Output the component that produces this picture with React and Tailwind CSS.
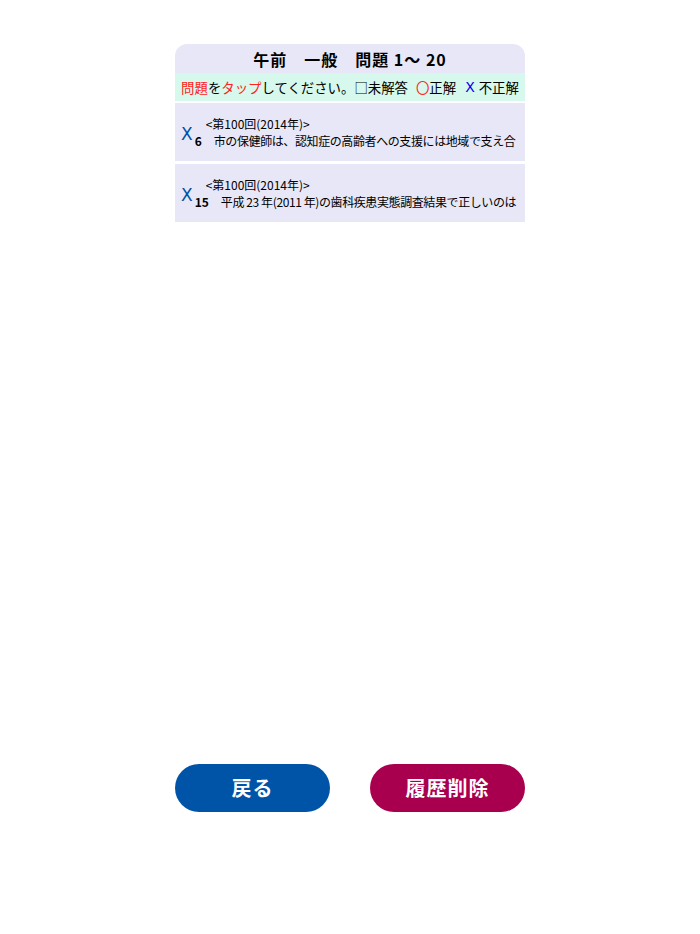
const history = [
  {
    no: 6,
    exam: "<第100回(2014年)>",
    text: "市の保健師は、認知症の高齢者への支援には地域で支え合",
  },
  {
    no: 15,
    exam: "<第100回(2014年)>",
    text: "平成 23 年(2011 年)の歯科疾患実態調査結果で正しいのは",
  },
];

const HistoryRow = ({ item }) => {
  return (
    <div className="h-[58px] flex items-center pl-[6px] bg-[#e8e7f7] overflow-hidden">
      <span className="pt-[4px] font-['DejaVu_Sans',sans-serif] text-[17px] leading-none text-[#0052a8]">X</span>
      <div className="ml-[2px] flex flex-col min-w-0">
        <p className="pl-[11px] text-[12px] leading-[17px] text-black whitespace-nowrap">{item.exam}</p>
        <p className="flex items-baseline text-[12px] leading-[17px] text-black whitespace-nowrap">
          <span className="font-bold">{item.no}</span>
          <span className="ml-3 tracking-[-0.4px]">{item.text}</span>
        </p>
      </div>
    </div>
  );
};

export default function App() {
  return (
    <div className="h-[934px] bg-white flex flex-col items-center font-['Noto_Sans_CJK_JP',sans-serif]">
      <div className="mt-[44px] w-[350px] flex flex-col">
        <div className="h-[29px] rounded-t-[12px] bg-[#e8e7f7] flex items-center justify-center">
          <h1 className="text-[16px] font-bold tracking-[1px] text-black">午前　一般　問題 1〜 20</h1>
        </div>
        <div className="h-[28px] bg-[#d7f8ec] flex items-center justify-center">
          <p className="flex items-center text-[13.4px] text-black whitespace-nowrap">
            <span className="text-[#ff2020]">問題</span>
            <span>を</span>
            <span className="text-[#ff2020]">タップ</span>
            <span>してください。</span>
            <span>□未解答</span>
            <span className="ml-[8px] text-[#ff2020]">〇</span>
            <span>正解</span>
            <span className="ml-[9px] font-['DejaVu_Sans',sans-serif] text-[14px] text-[#0000ee]">X</span>
            <span className="ml-[4px]">不正解</span>
          </p>
        </div>
        <div className="mt-[2px] flex flex-col gap-[3px]">
          {history.map((item) => (
            <HistoryRow key={item.no} item={item} />
          ))}
        </div>
      </div>

      <div className="mt-auto mb-[122px] w-[350px] flex justify-between">
        <button className="w-[155px] h-[48px] rounded-full bg-[#0054a8] text-white text-[20px] font-bold tracking-[1px]">戻る</button>
        <button className="w-[155px] h-[48px] rounded-full bg-[#a8004f] text-white text-[20px] font-bold tracking-[1px]">履歴削除</button>
      </div>
    </div>
  );
}
